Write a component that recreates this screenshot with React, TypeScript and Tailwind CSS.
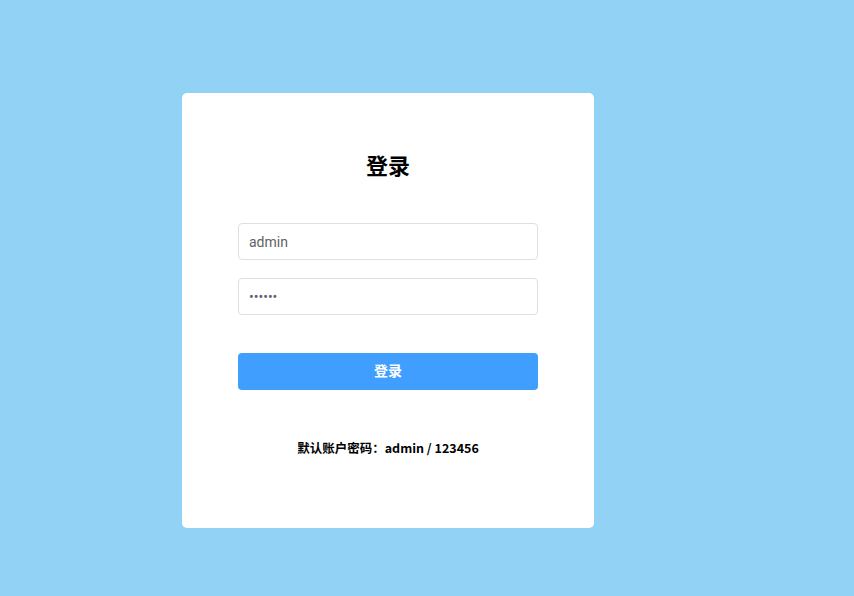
import React from "react";

export default function App() {
  return (
    <div
      className="w-[854px] h-[596px] bg-[#92d3f5] pt-[93px] pl-[182px]"
      style={{ fontFamily: '"Noto Sans CJK SC", "Noto Sans", sans-serif' }}
    >
      <div className="w-[412px] h-[435px] bg-white rounded-[5px] px-[56px] pt-[47px] flex flex-col">
        <h2 className="text-[22px] font-bold leading-[48px] text-center text-black">登录</h2>
        <div className="mt-[35px] flex flex-col gap-[18px]">
          <input
            className="h-[37px] w-full border border-[#dcdfe6] rounded-[4px] px-[10px] text-[14px] text-[#606266] outline-none"
            style={{ fontFamily: 'Roboto, "Noto Sans CJK SC", sans-serif' }}
            defaultValue="admin"
          />
          <input
            type="password"
            className="h-[37px] w-full border border-[#dcdfe6] rounded-[4px] px-[10px] text-[14px] text-[#606266] outline-none"
            style={{ fontFamily: 'Roboto, "Noto Sans CJK SC", sans-serif' }}
            defaultValue="123456"
          />
        </div>
        <button className="mt-[38px] h-[37px] w-full bg-[#409eff] rounded-[4px] text-white text-[14px] font-bold leading-[37px]">
          <span className="relative top-[-1px]">登录</span>
        </button>
        <p className="mt-[48px] text-center text-[12.5px] font-bold text-black leading-[20px]">
          默认账户密码：admin / 123456
        </p>
      </div>
    </div>
  );
}
